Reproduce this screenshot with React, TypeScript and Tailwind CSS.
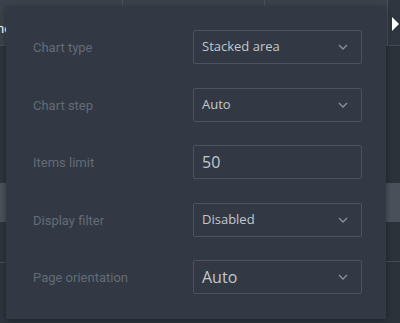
import React from "react";

const Chevron = () => (
  <svg width="10" height="6" viewBox="0 0 10 6" className="shrink-0">
    <path d="M1 1 L5 5 L9 1" fill="none" stroke="#8a919a" strokeWidth="1.3" />
  </svg>
);

type Row = { label: string; value: string; select: boolean; big?: boolean };

const rows: Row[] = [
  { label: "Chart type", value: "Stacked area", select: true },
  { label: "Chart step", value: "Auto", select: true },
  { label: "Items limit", value: "50", select: false, big: true },
  { label: "Display filter", value: "Disabled", select: true },
  { label: "Page orientation", value: "Auto", select: true, big: true },
];

export default function App() {
  return (
    <div className="relative w-[400px] h-[323px] overflow-hidden bg-[#2e343d]">
      {/* background table */}
      <div className="flex flex-col h-full">
        <div className="h-[46px] flex bg-[#30363f] border-b border-[#454b54]">
          <div className="w-[124px] border-r border-[#4a5059] bg-[#3b414a] flex items-center overflow-hidden">
            <span className="text-white text-[13px] ml-[-3px] mt-[12px]" style={{ fontFamily: "Roboto, sans-serif" }}>ne</span>
          </div>
          <div className="w-[144px] border-r border-[#4a5059] bg-[#3b414a]" />
          <div className="w-[124px] border-r border-[#4a5059] bg-[#3b414a]" />
          <div className="flex-1 flex items-center justify-start pl-[4px] pt-[2px]">
            <svg width="8" height="14" viewBox="0 0 8 14">
              <path d="M0 0 L7 7 L0 14 Z" fill="#ffffff" />
            </svg>
          </div>
        </div>
        <div className="flex-1 flex">
          <div className="w-[6px] flex flex-col">
            <div className="h-[137px]" />
            <div className="h-[39px] bg-[#4a5059]" />
            <div className="h-[40px]" />
            <div className="border-t border-[#454b54]" />
          </div>
          <div className="flex-1" />
          <div className="w-[14px] flex flex-col bg-[#2c323a]">
            <div className="h-[137px]" />
            <div className="h-[39px] bg-[#4a5059]" />
            <div className="h-[39px]" />
            <div className="border-t border-[#454b54]" />
          </div>
        </div>
      </div>

      {/* popover panel */}
      <div className="absolute left-[6px] top-[6px] w-[380px] h-[313px] bg-[#323944] shadow-[0_2px_6px_rgba(0,0,0,0.35)] pl-[27px] pr-[24px] pt-[24px] flex flex-col gap-[23.5px]">
        {rows.map((r) => (
          <div key={r.label} className="flex items-center h-[34px]">
            <div
              className="w-[160px] text-[13px] text-[#636b76] pt-[2px]"
              style={{ fontFamily: "Roboto, Arial, sans-serif" }}
            >
              {r.label}
            </div>
            <div className="flex-1 h-[34px] border border-[#4b525d] rounded-[2px] flex items-center pl-[8px] pr-[13px]">
              <span
                className={`flex-1 text-[#c3c8ce] ${r.big ? "text-[16px]" : "text-[13px]"}`}
                style={{ fontFamily: "'Open Sans', 'Noto Sans', sans-serif" }}
              >
                {r.value}
              </span>
              {r.select && <Chevron />}
            </div>
          </div>
        ))}
      </div>
    </div>
  );
}
